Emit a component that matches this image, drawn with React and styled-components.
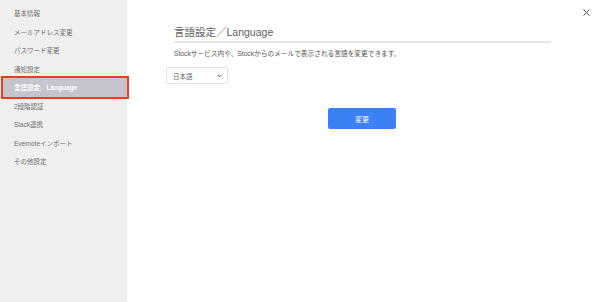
import React from "react";
import styled, { createGlobalStyle } from "styled-components";

const Global = createGlobalStyle`
  html, body { margin: 0; padding: 0; background: #fff; }
  body { font-family: "Liberation Sans", "Noto Sans CJK JP", sans-serif; }
`;

const Page = styled.div`
  display: flex;
  width: 600px;
  height: 302px;
  position: relative;
  overflow: hidden;
`;

const Sidebar = styled.nav`
  width: 127px;
  flex: none;
  background: #efefef;
  padding-top: 4px;
  box-sizing: border-box;
  display: flex;
  flex-direction: column;
`;

const NavItem = styled.div`
  height: 18.5px;
  display: flex;
  align-items: center;
  font-size: 6.5px;
  color: ${(p) => (p.$active ? "#ffffff" : "#707070")};
  font-weight: ${(p) => (p.$active ? 700 : 400)};
  background: ${(p) => (p.$active ? "#c6c5cd" : "transparent")};
  outline: ${(p) => (p.$active ? "2px solid #ee3b22" : "none")};
  margin-left: ${(p) => (p.$active ? "3px" : "0")};
  padding-left: ${(p) => (p.$active ? "11px" : "14px")};
  width: ${(p) => (p.$active ? "124px" : "auto")};
  box-sizing: border-box;
  white-space: nowrap;
`;

const Main = styled.main`
  flex: 1;
  padding: 25px 0 0 47px;
  box-sizing: border-box;
`;

const Content = styled.div`
  width: 377px;
  display: flex;
  flex-direction: column;
`;

const Title = styled.h1`
  margin: 0;
  font-size: 10.5px;
  font-weight: 400;
  color: #5e5e5e;
  line-height: 14px;
  padding-bottom: 2px;
  border-bottom: 2px solid #e6e6e6;
`;

const Desc = styled.p`
  margin: 6px 0 0 0;
  font-size: 6.7px;
  color: #555;
  line-height: 10px;
`;

const SelectBox = styled.div`
  margin: 8px 0 0 -8px;
  width: 62px;
  height: 17px;
  border: 1px solid #e2e2e2;
  border-radius: 2px;
  box-sizing: border-box;
  display: flex;
  align-items: center;
  justify-content: space-between;
  padding: 0 5px 0 6px;
  font-size: 6.5px;
  color: #666;
  background: #fff;
`;

const ButtonRow = styled.div`
  display: flex;
  justify-content: center;
  margin-top: 24px;
`;

const Button = styled.button`
  width: 68px;
  height: 21px;
  border: none;
  border-radius: 2px;
  background: #3b81f4;
  color: #fff;
  font-size: 7px;
  font-family: inherit;
  padding: 0;
  margin-left: -1px;
`;

const Close = styled.div`
  position: absolute;
  top: 9px;
  right: 10px;
  width: 7px;
  height: 7px;
  display: flex;
`;

const items = [
  "基本情報",
  "メールアドレス変更",
  "パスワード変更",
  "通知設定",
  "言語設定／Language",
  "2段階認証",
  "Slack連携",
  "Evernoteインポート",
  "その他設定",
];

export default function App() {
  return (
    <>
      <Global />
      <Page>
        <Sidebar>
          {items.map((t, i) => (
            <NavItem key={t} $active={i === 4}>
              {t}
            </NavItem>
          ))}
        </Sidebar>
        <Main>
          <Content>
            <Title>言語設定／Language</Title>
            <Desc>Stockサービス内や、Stockからのメールで表示される言語を変更できます。</Desc>
            <SelectBox>
              <span>日本語</span>
              <svg width="5" height="4" viewBox="0 0 5 4">
                <path d="M0.6 0.9 L2.5 2.8 L4.4 0.9" fill="none" stroke="#444" strokeWidth="1" />
              </svg>
            </SelectBox>
            <ButtonRow>
              <Button>変更</Button>
            </ButtonRow>
          </Content>
        </Main>
        <Close>
          <svg width="7" height="7" viewBox="0 0 7 7">
            <path d="M0.5 0.5 L6.5 6.5 M6.5 0.5 L0.5 6.5" stroke="#555" strokeWidth="1" />
          </svg>
        </Close>
      </Page>
    </>
  );
}
